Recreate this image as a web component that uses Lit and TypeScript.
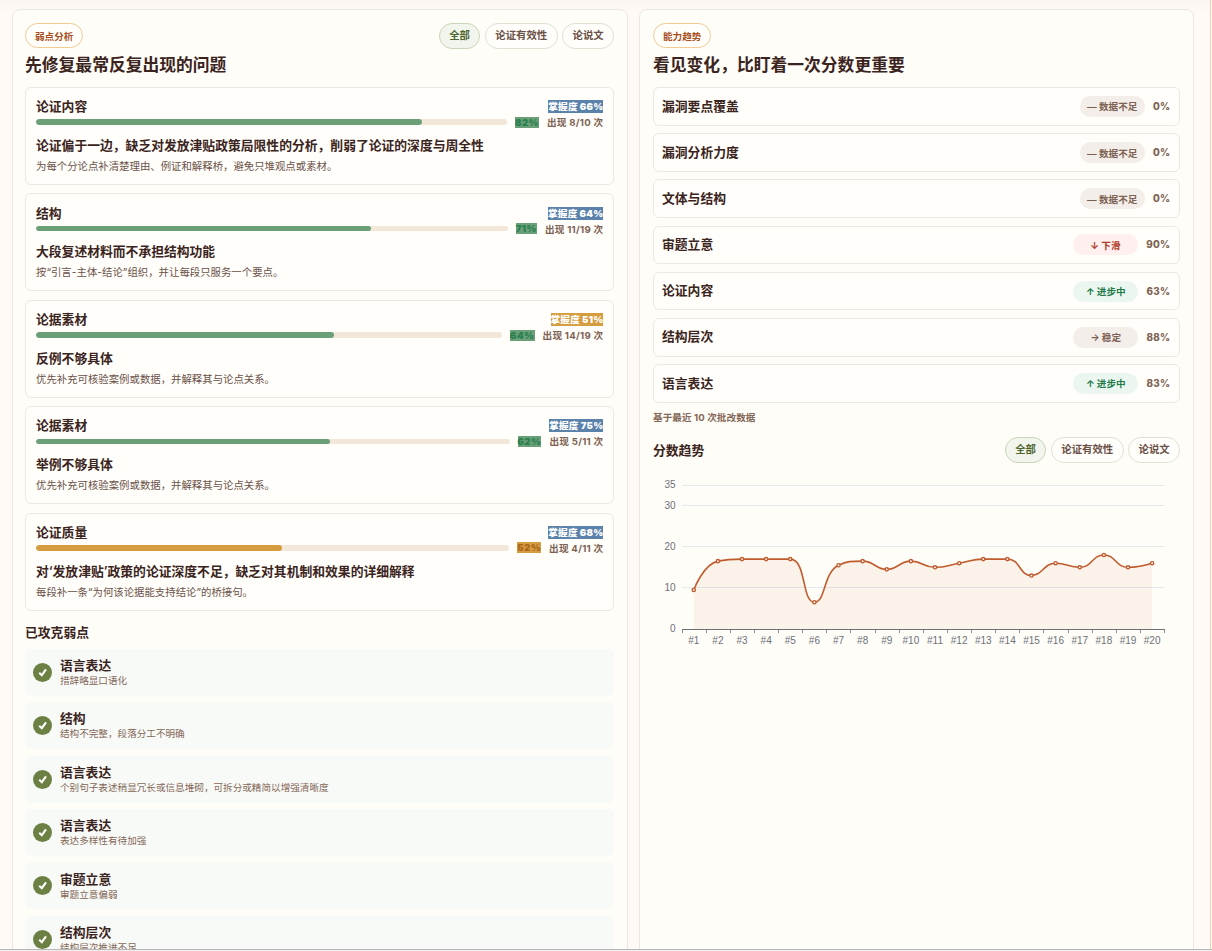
import { LitElement, html, svg, css } from "lit";
import { customElement, property } from "lit/decorators.js";

const base = css`
  * { box-sizing: border-box; }
  :host { display: block; }
`;

@customElement("filter-pills")
class FilterPills extends LitElement {
  static styles = [base, css`
    .group { display: flex; gap: 4.7px; }
    .pill {
      height: 25.6px; padding: 0 9.3px 2px; border: 1px solid #dfe3d3; border-radius: 13px;
      display: flex; align-items: center; font-size: 10.4px; font-weight: 600; color: #6b5148;
      background: #fffefa; white-space: nowrap;
    }
    .active { background: #f2f5ee; border-color: #cbd5b8; color: #4f6530; font-weight: 700; }
  `];
  render() {
    return html`<div class="group">
      ${["全部", "论证有效性", "论说文"].map((t, i) => html`<div class="pill ${i === 0 ? "active" : ""}">${t}</div>`)}
    </div>`;
  }
}

interface Weak { name: string; tag: number; tone: string; pct: number; bar: string; count: string; head: string; desc: string; }

const weak: Weak[] = [
  { name: "论证内容", tag: 66, tone: "blue", pct: 82, bar: "green", count: "8/10", head: "论证偏于一边，缺乏对发放津贴政策局限性的分析，削弱了论证的深度与周全性", desc: "为每个分论点补清楚理由、例证和解释桥，避免只堆观点或素材。" },
  { name: "结构", tag: 64, tone: "blue", pct: 71, bar: "green", count: "11/19", head: "大段复述材料而不承担结构功能", desc: "按“引言-主体-结论”组织，并让每段只服务一个要点。" },
  { name: "论据素材", tag: 51, tone: "amber", pct: 64, bar: "green", count: "14/19", head: "反例不够具体", desc: "优先补充可核验案例或数据，并解释其与论点关系。" },
  { name: "论据素材", tag: 75, tone: "blue", pct: 62, bar: "green", count: "5/11", head: "举例不够具体", desc: "优先补充可核验案例或数据，并解释其与论点关系。" },
  { name: "论证质量", tag: 68, tone: "blue", pct: 52, bar: "amber", count: "4/11", head: "对‘发放津贴’政策的论证深度不足，缺乏对其机制和效果的详细解释", desc: "每段补一条“为何该论据能支持结论”的桥接句。" },
];

const mastered = [
  ["语言表达", "措辞略显口语化"],
  ["结构", "结构不完整，段落分工不明确"],
  ["语言表达", "个别句子表述稍显冗长或信息堆砌，可拆分或精简以增强清晰度"],
  ["语言表达", "表达多样性有待加强"],
  ["审题立意", "审题立意偏弱"],
  ["结构层次", "结构层次推进不足"],
];

const abilities: [string, string, string, number][] = [
  ["漏洞要点覆盖", "flat", "— 数据不足", 0],
  ["漏洞分析力度", "flat", "— 数据不足", 0],
  ["文体与结构", "flat", "— 数据不足", 0],
  ["审题立意", "down", "↓ 下滑", 90],
  ["论证内容", "up", "↑ 进步中", 63],
  ["结构层次", "flat", "→ 稳定", 88],
  ["语言表达", "up", "↑ 进步中", 83],
];

@customElement("weak-card")
class WeakCard extends LitElement {
  @property({ attribute: false }) item!: Weak;
  static styles = [base, css`
    .card { height: 97.7px; padding: 10.1px 9.6px 0 10px; border: 1px solid #eee8e3; border-radius: 6px; background: #fffefa; }
    .top { display: flex; justify-content: space-between; align-items: center; height: 17px; }
    .name { font-size: 12.8px; line-height: 17px; font-weight: 600; }
    .tag { height: 13px; line-height: 13px; font-size: 9.6px; font-weight: 900; letter-spacing: 0.2px; color: #fff; }
    .tag.blue { background: #5b82aa; }
    .tag.amber { background: #d69c40; }
    .meter { display: flex; align-items: center; gap: 8px; height: 14px; font-size: 9.6px; font-weight: 700; letter-spacing: 0.28px; color: #7d6253; }
    .track { flex: 1; height: 5.6px; border-radius: 3px; background: #f3e7da; overflow: hidden; }
    .fill { height: 100%; border-radius: 3px; }
    .fill.green { background: #6a9f78; }
    .fill.amber { background: #d69c40; }
    .pct { height: 11px; line-height: 11px; font-weight: 900; letter-spacing: 0.4px; }
    .pct.green { background: #6a9f78; color: #2b8050; }
    .pct.amber { background: #d69c40; color: #a8651a; }
    .head { margin-top: 6.9px; font-size: 12.8px; line-height: 20px; font-weight: 600; }
    .desc { margin-top: 2px; font-size: 10.4px; line-height: 17px; color: #6b5148; }
  `];
  render() {
    const w = this.item;
    return html`<div class="card">
      <div class="top"><span class="name">${w.name}</span><span class="tag ${w.tone}">掌握度 ${w.tag}%</span></div>
      <div class="meter">
        <div class="track"><div class="fill ${w.bar}" style="width:${w.pct}%"></div></div>
        <span class="pct ${w.bar}">${w.pct}%</span><span>出现 ${w.count} 次</span>
      </div>
      <div class="head">${w.head}</div>
      <div class="desc">${w.desc}</div>
    </div>`;
  }
}

@customElement("score-chart")
class ScoreChart extends LitElement {
  static styles = [base, css`
    svg { display: block; }
    text { font-family: "Liberation Sans", Arial, sans-serif; font-size: 10px; fill: #6e7079; }
  `];

  private curve(p: number[][]) {
    const smooth = 0.5;
    const clamp = (v: number, a: number, b: number) => Math.max(Math.min(v, Math.max(a, b)), Math.min(a, b));
    let d = `M${p[0]}`;
    let c0 = p[0];
    for (let i = 1; i < p.length; i++) {
      const [x, y] = p[i];
      const [px, py] = p[i - 1];
      let c1 = [x, y];
      let n0 = [x, y];
      if (i < p.length - 1) {
        const [nx, ny] = p[i + 1];
        const lp = Math.hypot(x - px, y - py);
        const ln = Math.hypot(nx - x, ny - y);
        const r = ln / (ln + lp);
        n0 = [clamp(x + (nx - px) * smooth * r, nx, x), clamp(y + (ny - py) * smooth * r, ny, y)];
        c1 = [clamp(x - ((n0[0] - x) * lp) / ln, px, x), clamp(y - ((n0[1] - y) * lp) / ln, py, y)];
        n0 = [x + ((x - c1[0]) * ln) / lp, y + ((y - c1[1]) * ln) / lp];
      }
      d += `C${c0} ${c1} ${x},${y}`;
      c0 = n0;
    }
    return d;
  }

  render() {
    const values = [9.5, 16.5, 17, 17, 17, 6.5, 15.5, 16.5, 14.5, 16.5, 15, 16, 17, 17, 13, 16, 15, 18, 15, 16];
    const left = 29, right = 511.5, zero = 159, step = (right - left) / 20;
    const yOf = (v: number) => zero - v * 4.113;
    const pts = values.map((v, i) => [left + step * (i + 0.5) - 0.3, yOf(v)]);
    const line = this.curve(pts);
    return html`<svg width="527" height="184" viewBox="0 0 527 184">
      ${[10, 20, 30, 35].map((v) => { const y = Math.floor(yOf(v)) + 0.5; return svg`<line x1=${left} x2=${right} y1=${y} y2=${y} stroke="#e4e8ef"/>`; })}
      ${[0, 10, 20, 30, 35].map((v) => svg`<text x="22.5" y=${yOf(v) + 3.3} text-anchor="end">${v}</text>`)}
      <path d="${line}L${pts[19][0]},${zero}L${pts[0][0]},${zero}Z" fill="#c4562a" fill-opacity="0.065"/>
      <path d="M${left} 159.5H${right}" stroke="#6e7079"/>
      ${Array.from({ length: 21 }, (_, i) => { const x = Math.round(left + step * i - 0.5) + 0.5; return svg`<line x1=${x} x2=${x} y1="159" y2="163" stroke="#6e7079" stroke-width="0.8"/>`; })}
      <path d=${line} fill="none" stroke="#c05c2e" stroke-width="1.6" stroke-linejoin="bevel"/>
      ${pts.map(([x, y], i) => svg`<circle cx=${x} cy=${y} r="1.6" fill="#fff" stroke="#c05c2e" stroke-width="1.4"/>
        <text x=${x} y="173.5" text-anchor="middle">#${i + 1}</text>`)}
    </svg>`;
  }
}

@customElement("app-root")
class AppRoot extends LitElement {
  static styles = [base, css`
    :host {
      height: 951px; overflow: hidden; color: #3b2420;
      font-family: Inter, "Noto Sans CJK SC", sans-serif;
      background: linear-gradient(#fbf5f1, #fffaf5 13px);
    }
    .frame { height: 949px; overflow: hidden; display: grid; grid-template-columns: 616px 555px; gap: 11px; padding: 9px 0 0 12px; width: 1211px; border-right: 1px solid #ecd3b0; }
    .edge { height: 2px; background: #eee; border-top: 1px solid #b8b8b8; }
    .panel { height: 1100px; border: 1px solid #ebe6e2; border-radius: 8px; background: #fffdf8; padding: 13px 13px 0; }
    .left { padding-left: 12px; }
    .bar { display: flex; justify-content: space-between; height: 26px; }
    .badge { height: 25px; padding: 0 9px; border: 1px solid #f0cb94; border-radius: 13px; background: #fffefb; font-size: 9.6px; font-weight: 700; color: #a84e20; display: flex; align-items: center; }
    h2 { margin: 4.4px 0 0; font-size: 16.8px; line-height: 24px; font-weight: 600; }
    h3 { margin: 0; font-size: 12.8px; line-height: 20px; font-weight: 600; }
    .cards { display: grid; gap: 8.8px; margin-top: 9.55px; }
    .sub { margin-top: 12px; }
    .done { display: grid; gap: 6.4px; margin-top: 6.2px; }
    .item { height: 47px; border-radius: 6px; background: #f8faf8; display: flex; align-items: center; gap: 8px; padding-left: 8px; }
    .tick { width: 19px; height: 19px; flex: none; }
    .item-title { font-size: 12.8px; line-height: 16px; padding-top: 1.6px; font-weight: 600; }
    .item-desc { font-size: 9.6px; line-height: 14px; color: #846757; }
    .rows { display: grid; gap: 7.35px; margin-top: 9.7px; }
    .row { height: 38.8px; border: 1px solid #eee8e3; border-radius: 6px; background: #fffefa; display: flex; align-items: center; gap: 8px; padding: 0 8.6px 0 8px; }
    .row-name { flex: 1; font-size: 12.8px; line-height: 18px; padding-top: 0.4px; font-weight: 600; }
    .state { min-width: 65.4px; height: 21px; border-radius: 11px; display: flex; align-items: center; justify-content: center; font-size: 9.6px; font-weight: 700; }
    .flat { background: #f3eeea; color: #7d6253; }
    .down { background: #ffefee; color: #b03a28; }
    .up { background: #ecf6f0; color: #217a48; }
    .value { font-size: 9.8px; font-weight: 800; letter-spacing: 0.3px; color: #7d6253; }
    .note { margin-top: 7.4px; font-size: 9.6px; line-height: 16px; font-weight: 700; letter-spacing: 0.08px; color: #846757; }
    .chart-head { display: flex; justify-content: space-between; align-items: center; margin-top: 10.6px; height: 26px; }
    .chart-head h3 { padding-top: 2px; }
    .chart { margin-top: 7.4px; }
  `];
  render() {
    return html`
      <div class="frame">
        <section class="panel left">
          <div class="bar"><span class="badge">弱点分析</span><filter-pills></filter-pills></div>
          <h2>先修复最常反复出现的问题</h2>
          <div class="cards">${weak.map((w) => html`<weak-card .item=${w}></weak-card>`)}</div>
          <h3 class="sub">已攻克弱点</h3>
          <div class="done">
            ${mastered.map(([t, d]) => html`<div class="item">
              <svg class="tick" viewBox="0 0 19 19"><circle cx="9.5" cy="9.5" r="9.5" fill="#6b8042"/><path d="M6.2 9.8 8.8 12.2 13 6.3" fill="none" stroke="#fff" stroke-width="2.1"/></svg>
              <div><div class="item-title">${t}</div><div class="item-desc">${d}</div></div>
            </div>`)}
          </div>
        </section>
        <section class="panel">
          <div class="bar"><span class="badge">能力趋势</span></div>
          <h2>看见变化，比盯着一次分数更重要</h2>
          <div class="rows">
            ${abilities.map(([n, k, s, v]) => html`<div class="row">
              <span class="row-name">${n}</span><span class="state ${k}">${s}</span><span class="value">${v}%</span>
            </div>`)}
          </div>
          <div class="note">基于最近 10 次批改数据</div>
          <div class="chart-head"><h3>分数趋势</h3><filter-pills></filter-pills></div>
          <score-chart class="chart"></score-chart>
        </section>
      </div>
      <div class="edge"></div>`;
  }
}
